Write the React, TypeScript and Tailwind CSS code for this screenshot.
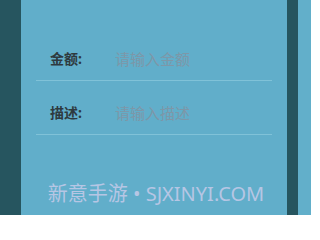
import React from 'react';

const fields = [
  { label: '金额:', placeholder: '请输入金额' },
  { label: '描述:', placeholder: '请输入描述' },
];

const App: React.FC = () => {
  return (
    <div
      className="flex w-[311px] h-[215px] overflow-hidden bg-[#62afca]"
      style={{ fontFamily: '"Noto Sans", "Noto Sans CJK SC", sans-serif' }}
    >
      <div className="w-[21px] shrink-0 bg-[#26555f]" />

      <div className="w-[266px] shrink-0 bg-[#61aeca] flex flex-col px-[15px] pt-[27px]">
        {fields.map((f) => (
          <div key={f.label} className="flex items-center pt-[22px] pb-[11px] border-b border-[#80c2d8]">
            <span className="w-[79px] shrink-0 pl-[14px] text-[14px] leading-[20px] font-bold text-[#2e3a3f]">
              {f.label}
            </span>
            <input
              type="text"
              placeholder={f.placeholder}
              className="flex-1 min-w-0 h-[20px] p-0 bg-transparent outline-none text-[15px] leading-[20px] text-[#2e3a3f] placeholder:text-[#7d97a8] placeholder:opacity-100"
            />
          </div>
        ))}

        <p className="mt-[45px] pl-[4px] text-center text-[20px] leading-[28px] text-[#b6c6e4] whitespace-nowrap">
          新意手游 • SJXINYI.COM
        </p>
      </div>

      <div className="w-[11px] shrink-0 bg-[#26555f]" />
      <div className="flex-1 bg-[#62afca]" />
    </div>
  );
};

export default App;
